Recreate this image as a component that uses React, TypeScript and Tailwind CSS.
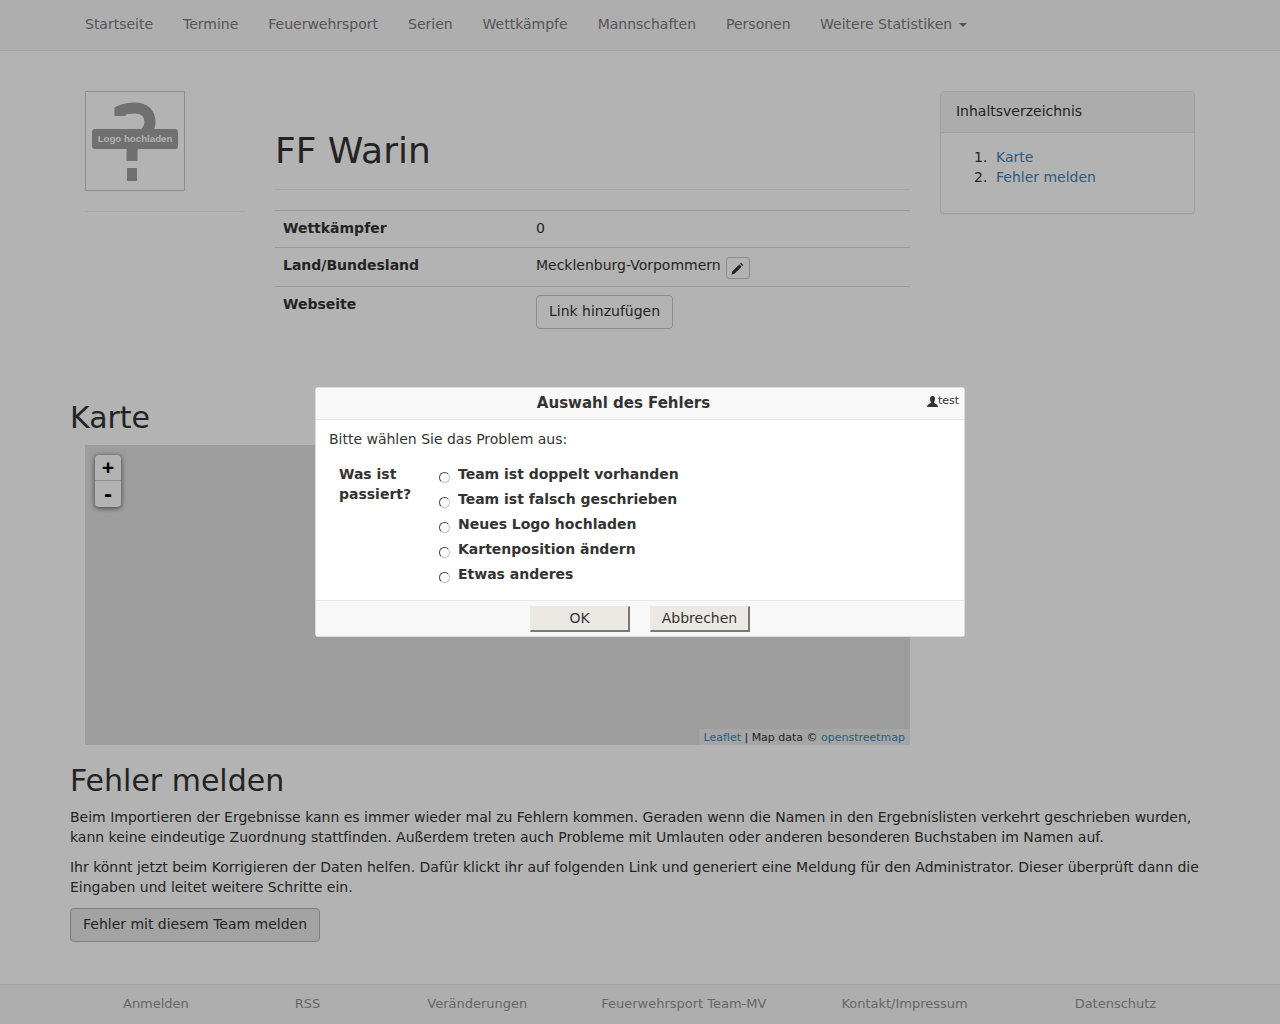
const font = { fontFamily: '"DejaVu Sans", sans-serif' };

const nav = ["Startseite", "Termine", "Feuerwehrsport", "Serien", "Wettkämpfe", "Mannschaften", "Personen"];
const problems = ["Team ist doppelt vorhanden", "Team ist falsch geschrieben", "Neues Logo hochladen", "Kartenposition ändern", "Etwas anderes"];

function Logo() {
  return (
    <div className="relative h-[100px] w-[100px] border border-[#8f8f8f]">
      <svg className="absolute left-0 top-0" width="98" height="98" viewBox="0 0 98 98">
        <path d="M34 24 V19 C38 17 43 16 49 16 C59 16 64 22 64 30 C64 38 58 42 52 47 C48 51 46 55 46 60 V69" fill="none" stroke="#707070" strokeWidth="11" />
        <rect x="41" y="76" width="10" height="13" fill="#707070" />
      </svg>
      <div className="absolute left-[6px] top-[37px] flex h-[20px] w-[86px] items-center justify-center rounded-[3px] bg-[#707070] text-[9.7px] font-bold text-[#b3b3b3] [font-family:'Liberation_Sans',sans-serif]">
        Logo hochladen
      </div>
    </div>
  );
}

export default function App() {
  return (
    <div style={font} className="relative h-[1024px] w-[1280px] overflow-hidden bg-[#b3b3b3] text-[14px] leading-[1.42857143] tracking-[-0.008px] text-[#232323]">
      <nav className="flex h-[51px] border-b border-[#a3a3a3] bg-[#aeaeae] pl-[70px] text-[#555555]">
        {nav.map((n) => (
          <span key={n} className="px-[15px] pb-[16px] pt-[14px]">{n}</span>
        ))}
        <span className="flex items-center pb-[2px] pl-[14.5px] pr-[15px]">
          Weitere Statistiken
          <span className="ml-[7px] mt-[2px] h-0 w-0 border-x-[4px] border-t-[4px] border-x-transparent border-t-[#555555]" />
        </span>
      </nav>

      <main className="px-[70px]">
        <div className="flex pt-[40px]">
          <div className="ml-[15px] w-[160px]">
            <Logo />
            <div className="mt-[20px] border-t border-[#a8a8a8]" />
          </div>
          <div className="ml-[30px] w-[635px]">
            <h1 className="mt-[40px] border-b border-[#a8a8a8] pb-[18px] text-[36px] leading-[40px] font-normal">FF Warin</h1>
            <table className="mt-[20px] w-full border-collapse">
              <tbody>
                <tr className="border-y border-[#9a9a9a]">
                  <td className="w-[253px] px-[8px] pb-[9px] pt-[7px] align-top font-bold">Wettkämpfer</td>
                  <td className="px-[8px] pb-[9px] pt-[7px] align-top">0</td>
                </tr>
                <tr className="border-b border-[#9a9a9a]">
                  <td className="px-[8px] py-[7px] align-top font-bold">Land/Bundesland</td>
                  <td className="px-[8px] py-[7px] align-top">
                    <span className="flex items-start">
                      Mecklenburg-Vorpommern
                      <span className="ml-[5px] mt-[2px] flex h-[22px] w-[24px] items-center justify-center rounded-[3px] border border-[#8c8c8c]">
                        <svg width="13" height="13" viewBox="0 0 13 13">
                          <path d="M0.5 12.5 L1.2 9.5 L8.3 2.4 L10.6 4.7 L3.5 11.8 Z M9 1.7 L10 0.7 L12.3 3 L11.3 4 Z" fill="#232323" />
                        </svg>
                      </span>
                    </span>
                  </td>
                </tr>
                <tr>
                  <td className="px-[8px] pb-[9px] pt-[7px] align-top font-bold">Webseite</td>
                  <td className="p-[8px] align-top">
                    <span className="inline-block rounded-[4px] border border-[#8c8c8c] px-[12px] pb-[7px] pt-[5px]">Link hinzufügen</span>
                  </td>
                </tr>
              </tbody>
            </table>
          </div>
          <aside className="ml-[30px] h-[123px] w-[255px] rounded-[4px] border border-[#a0a0a0] shadow-[0_1px_1px_rgba(0,0,0,0.05)]">
            <div className="h-[41px] border-b border-[#a0a0a0] bg-[#acacac] px-[15px] py-[9px]">Inhaltsverzeichnis</div>
            <ol className="pl-[33px] pt-[14px]">
              <li className="flex"><span className="w-[22px]">1.</span><span className="text-[#2f5a80]">Karte</span></li>
              <li className="flex"><span className="w-[22px]">2.</span><span className="text-[#2f5a80]">Fehler melden</span></li>
            </ol>
          </aside>
        </div>

        <h2 className="mt-[64px] text-[30px] leading-[33px] font-normal">Karte</h2>
        <div className="relative ml-[15px] mt-[11px] h-[300px] w-[825px] bg-[#9d9d9d]">
          <div className="absolute left-[10px] top-[10px] w-[26px] overflow-hidden rounded-[4px] bg-[#b3b3b3] font-bold text-black shadow-[0_1px_5px_rgba(0,0,0,0.65)] [font-family:'DejaVu_Sans_Mono',monospace]">
            <div className="flex h-[26px] items-center justify-center border-b border-[#8f8f8f] text-[20px]">+</div>
            <div className="flex h-[26px] items-center justify-center text-[20px]">-</div>
          </div>
          <div className="absolute bottom-0 right-0 bg-[#a5a5a5] px-[5px] pt-[1px] text-[11px] leading-[15px] text-[#232323]">
            <span className="text-[#1f5f7f]">Leaflet</span> | Map data © <span className="text-[#1f5f7f]">openstreetmap</span>
          </div>
        </div>

        <h2 className="mt-[19px] text-[30px] leading-[33px] font-normal">Fehler melden</h2>
        <p className="mt-[10px]">
          Beim Importieren der Ergebnisse kann es immer wieder mal zu Fehlern kommen. Geraden wenn die Namen in den Ergebnislisten verkehrt geschrieben wurden, kann keine eindeutige Zuordnung stattfinden. Außerdem treten auch Probleme mit Umlauten oder anderen besonderen Buchstaben im Namen auf.
        </p>
        <p className="mt-[10px]">
          Ihr könnt jetzt beim Korrigieren der Daten helfen. Dafür klickt ihr auf folgenden Link und generiert eine Meldung für den Administrator. Dieser überprüft dann die Eingaben und leitet weitere Schritte ein.
        </p>
        <span className="mt-[11px] inline-block rounded-[4px] border border-[#7f7f7f] bg-[#a3a3a3] px-[12px] pb-[7px] pt-[5px]">Fehler mit diesem Team melden</span>
      </main>

      <footer className="absolute inset-x-0 bottom-0 flex h-[40px] items-center border-t border-[#a3a3a3] bg-[#aeaeae] text-[13px] text-[#666666]">
        <span className="ml-[123px]">Anmelden</span>
        <span className="ml-[106px]">RSS</span>
        <span className="ml-[107px]">Veränderungen</span>
        <span className="ml-[74px]">Feuerwehrsport Team-MV</span>
        <span className="ml-[75px]">Kontakt/Impressum</span>
        <span className="ml-[107px]">Datenschutz</span>
      </footer>

      <div className="absolute left-[315px] top-[387px] w-[650px] rounded-[3px] border border-[#dddddd] bg-white text-[#333333]">
        <div className="relative h-[32px] border-b border-[#e8e8e8] bg-[#f8f8f8] pr-[33px] text-center text-[15px] font-bold leading-[30px]">
          Auswahl des Fehlers
          <span className="absolute right-[5px] top-[5px] flex items-center text-[11px] font-normal leading-[16px]">
            <svg width="11" height="11" viewBox="0 0 11 11">
              <path d="M5.5 0 C7.5 0 8 1.5 8 3 C8 5 7 6 7 6.5 C7 7.5 11 8 11 11 H0 C0 8 4 7.5 4 6.5 C4 6 3 5 3 3 C3 1.5 3.5 0 5.5 0 Z" fill="#333333" />
            </svg>
            test
          </span>
        </div>
        <div className="h-[180px] px-[13px] pt-[9px]">
          <p>Bitte wählen Sie das Problem aus:</p>
          <div className="mt-[15px] flex">
            <div className="ml-[10px] w-[100px] font-bold">Was ist passiert?</div>
            <div className="font-bold">
              {problems.map((p) => (
                <div key={p} className="flex h-[25px] items-start">
                  <span className="mr-[8px] mt-[8px] h-[11px] w-[11px] rounded-full border border-[#c4c4c4] border-l-[#444444] border-t-[#444444] bg-white" />
                  {p}
                </div>
              ))}
            </div>
          </div>
        </div>
        <div className="flex h-[36px] items-center justify-center gap-[20px] border-t border-[#e8e8e8] bg-[#f8f8f8]">
          <span className="flex h-[26px] w-[100px] items-center justify-center border border-b-2 border-r-2 border-[#ece9e4] border-b-[#777777] border-r-[#777777] bg-[#ece9e4]">OK</span>
          <span className="flex h-[26px] w-[100px] items-center justify-center border border-b-2 border-r-2 border-[#ece9e4] border-b-[#777777] border-r-[#777777] bg-[#ece9e4]">Abbrechen</span>
        </div>
      </div>
    </div>
  );
}
